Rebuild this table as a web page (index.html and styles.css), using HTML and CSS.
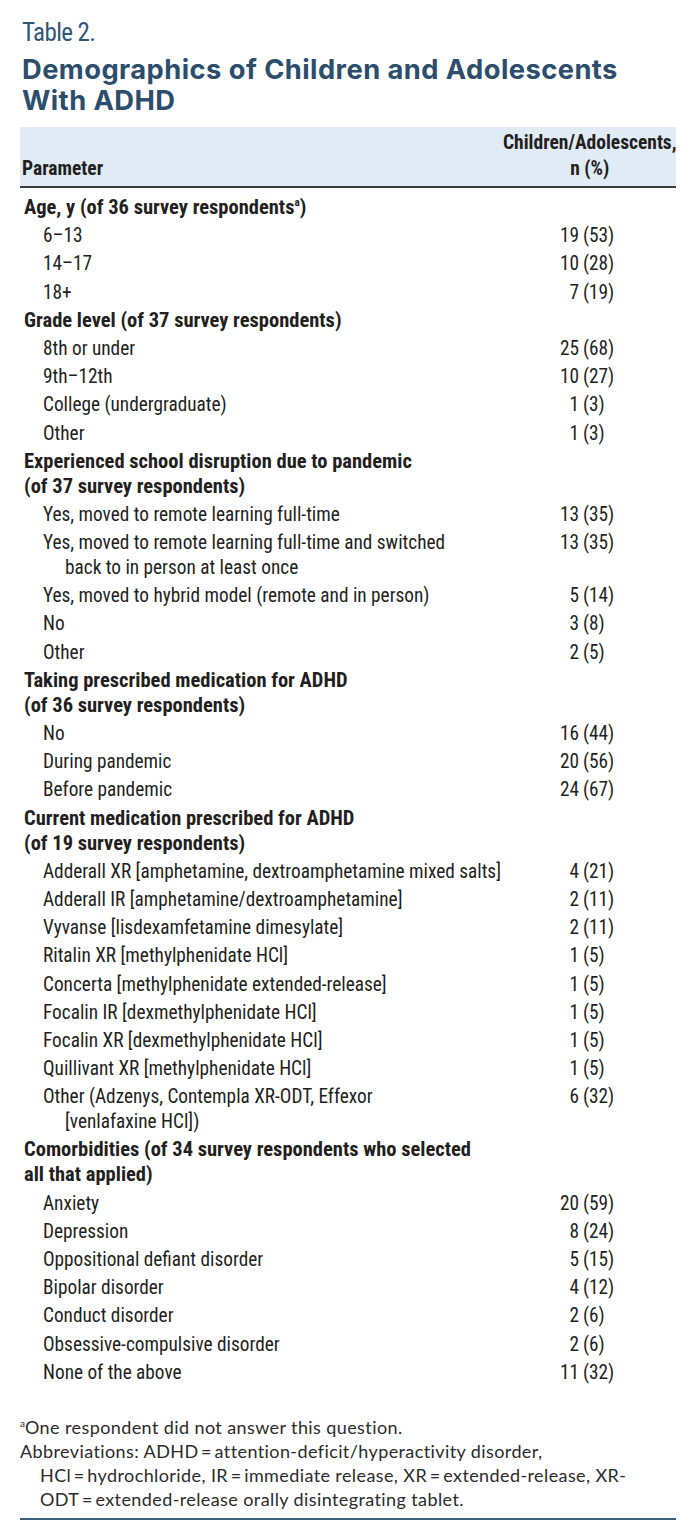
FILE: index.html
```html
<!DOCTYPE html>
<html lang="en">
<head>
<meta charset="utf-8">
<title>Table 2. Demographics of Children and Adolescents With ADHD</title>
<link rel="stylesheet" href="styles.css">
</head>
<body>
<div class="page">
  <div class="label">Table 2.</div>
  <h1 class="title">Demographics of Children and Adolescents<br>With ADHD</h1>
  <table class="tbl">
    <colgroup>
      <col class="c1">
      <col class="c2">
    </colgroup>
    <thead>
      <tr>
        <th class="param">Parameter</th>
        <th class="valh"><span class="hwrap">Children/Adolescents,<br>n (%)</span></th>
      </tr>
    </thead>
    <tbody>
      <tr class="first"><td class="sec" colspan="2">Age, y (of 36 survey respondents<sup>a</sup>)</td></tr>
      <tr><td class="item">6–13</td><td class="val"><span class="n">19</span><span class="p">(53)</span></td></tr>
      <tr><td class="item">14–17</td><td class="val"><span class="n">10</span><span class="p">(28)</span></td></tr>
      <tr><td class="item">18+</td><td class="val"><span class="n">7</span><span class="p">(19)</span></td></tr>

      <tr><td class="sec" colspan="2">Grade level (of 37 survey respondents)</td></tr>
      <tr><td class="item">8th or under</td><td class="val"><span class="n">25</span><span class="p">(68)</span></td></tr>
      <tr><td class="item">9th–12th</td><td class="val"><span class="n">10</span><span class="p">(27)</span></td></tr>
      <tr><td class="item">College (undergraduate)</td><td class="val"><span class="n">1</span><span class="p">(3)</span></td></tr>
      <tr><td class="item">Other</td><td class="val"><span class="n">1</span><span class="p">(3)</span></td></tr>

      <tr><td class="sec" colspan="2">Experienced school disruption due to pandemic<br>(of 37 survey respondents)</td></tr>
      <tr><td class="item">Yes, moved to remote learning full-time</td><td class="val"><span class="n">13</span><span class="p">(35)</span></td></tr>
      <tr><td class="item">Yes, moved to remote learning full-time and switched<br>back to in person at least once</td><td class="val"><span class="n">13</span><span class="p">(35)</span></td></tr>
      <tr><td class="item">Yes, moved to hybrid model (remote and in person)</td><td class="val"><span class="n">5</span><span class="p">(14)</span></td></tr>
      <tr><td class="item">No</td><td class="val"><span class="n">3</span><span class="p">(8)</span></td></tr>
      <tr><td class="item">Other</td><td class="val"><span class="n">2</span><span class="p">(5)</span></td></tr>

      <tr><td class="sec" colspan="2">Taking prescribed medication for ADHD<br>(of 36 survey respondents)</td></tr>
      <tr><td class="item">No</td><td class="val"><span class="n">16</span><span class="p">(44)</span></td></tr>
      <tr><td class="item">During pandemic</td><td class="val"><span class="n">20</span><span class="p">(56)</span></td></tr>
      <tr><td class="item">Before pandemic</td><td class="val"><span class="n">24</span><span class="p">(67)</span></td></tr>

      <tr><td class="sec" colspan="2">Current medication prescribed for ADHD<br>(of 19 survey respondents)</td></tr>
      <tr><td class="item">Adderall XR [amphetamine, dextroamphetamine mixed salts]</td><td class="val"><span class="n">4</span><span class="p">(21)</span></td></tr>
      <tr><td class="item">Adderall IR [amphetamine/dextroamphetamine]</td><td class="val"><span class="n">2</span><span class="p">(11)</span></td></tr>
      <tr><td class="item">Vyvanse [lisdexamfetamine dimesylate]</td><td class="val"><span class="n">2</span><span class="p">(11)</span></td></tr>
      <tr><td class="item">Ritalin XR [methylphenidate HCl]</td><td class="val"><span class="n">1</span><span class="p">(5)</span></td></tr>
      <tr><td class="item">Concerta [methylphenidate extended-release]</td><td class="val"><span class="n">1</span><span class="p">(5)</span></td></tr>
      <tr><td class="item">Focalin IR [dexmethylphenidate HCl]</td><td class="val"><span class="n">1</span><span class="p">(5)</span></td></tr>
      <tr><td class="item">Focalin XR [dexmethylphenidate HCl]</td><td class="val"><span class="n">1</span><span class="p">(5)</span></td></tr>
      <tr><td class="item">Quillivant XR [methylphenidate HCl]</td><td class="val"><span class="n">1</span><span class="p">(5)</span></td></tr>
      <tr><td class="item">Other (Adzenys, Contempla XR-ODT, Effexor<br>[venlafaxine HCl])</td><td class="val"><span class="n">6</span><span class="p">(32)</span></td></tr>

      <tr><td class="sec" colspan="2">Comorbidities (of 34 survey respondents who selected<br>all that applied)</td></tr>
      <tr><td class="item">Anxiety</td><td class="val"><span class="n">20</span><span class="p">(59)</span></td></tr>
      <tr><td class="item">Depression</td><td class="val"><span class="n">8</span><span class="p">(24)</span></td></tr>
      <tr><td class="item">Oppositional defiant disorder</td><td class="val"><span class="n">5</span><span class="p">(15)</span></td></tr>
      <tr><td class="item">Bipolar disorder</td><td class="val"><span class="n">4</span><span class="p">(12)</span></td></tr>
      <tr><td class="item">Conduct disorder</td><td class="val"><span class="n">2</span><span class="p">(6)</span></td></tr>
      <tr><td class="item">Obsessive-compulsive disorder</td><td class="val"><span class="n">2</span><span class="p">(6)</span></td></tr>
      <tr><td class="item">None of the above</td><td class="val"><span class="n">11</span><span class="p">(32)</span></td></tr>
    </tbody>
  </table>
  <div class="notes">
    <p class="note"><sup class="fsup">a</sup>One respondent did not answer this question.</p>
    <p class="note hang">Abbreviations: ADHD&thinsp;=&thinsp;attention-deficit/hyperactivity disorder,<br>HCl&thinsp;=&thinsp;hydrochloride, IR&thinsp;=&thinsp;immediate release, XR&thinsp;=&thinsp;extended-release, XR-<br>ODT&thinsp;=&thinsp;extended-release orally disintegrating tablet.</p>
  </div>
</div>
</body>
</html>
```
FILE: styles.css
```css
html, body {
  margin: 0;
  padding: 0;
  background: #ffffff;
}

.page {
  width: 656px;
  padding: 18px 13px 0 20px;
  color: #231f20;
  font-family: "Roboto Condensed", "Roboto", sans-serif;
  font-stretch: condensed;
}

.label {
  font-size: 25px;
  line-height: 30px;
  letter-spacing: -0.6px;
  color: #2f5677;
  padding-left: 2px;
}

.title {
  margin: 6px 0 11px 0;
  font-family: "Inter", "Open Sans", sans-serif;
  font-stretch: normal;
  font-weight: 700;
  font-size: 27.3px;
  line-height: 31px;
  letter-spacing: 0.45px;
  color: #2c4d6c;
  padding-left: 2px;
}

.tbl {
  width: 656px;
  table-layout: fixed;
  border-collapse: collapse;
  font-size: 19.3px;
  line-height: 25px;
}

.c1 {
  width: 481px;
}

.c2 {
  width: 175px;
}

.tbl thead tr {
  background: #e0ebf6;
}

.tbl th {
  font-weight: 700;
  font-size: 19.5px;
  line-height: 26px;
  border-bottom: 2px solid #3b3b3b;
  padding: 3px 2px 4px 2px;
  vertical-align: bottom;
}

.param {
  text-align: left;
}

.valh {
  text-align: right;
}

.hwrap {
  display: inline-block;
  text-align: center;
  white-space: nowrap;
}

.tbl td {
  padding: 1.6px 0;
  vertical-align: top;
}

.first td {
  padding-top: 7px;
}

.sec {
  font-weight: 700;
  font-size: 20.5px;
  padding-left: 4px !important;
  white-space: nowrap;
}

.item {
  padding-left: 45px !important;
  text-indent: -22px;
  white-space: nowrap;
}

.val {
  white-space: nowrap;
}

.n {
  display: inline-block;
  width: 78px;
  margin-right: 4px;
  text-align: right;
  text-indent: 0;
}

sup {
  font-size: 11px;
  line-height: 0;
  vertical-align: 8px;
}

.notes {
  margin-top: 29px;
  padding-bottom: 7px;
  border-bottom: 2px solid #3d5f80;
  font-family: "Lato", "Open Sans", sans-serif;
  font-stretch: normal;
  font-size: 18px;
  line-height: 24px;
  letter-spacing: 0.4px;
  color: #2b2b2b;
}

.note {
  margin: 0;
}

.fsup {
  font-size: 10px;
  vertical-align: 7px;
  letter-spacing: 0;
}

.hang {
  padding-left: 20px;
  text-indent: -20px;
}
```
